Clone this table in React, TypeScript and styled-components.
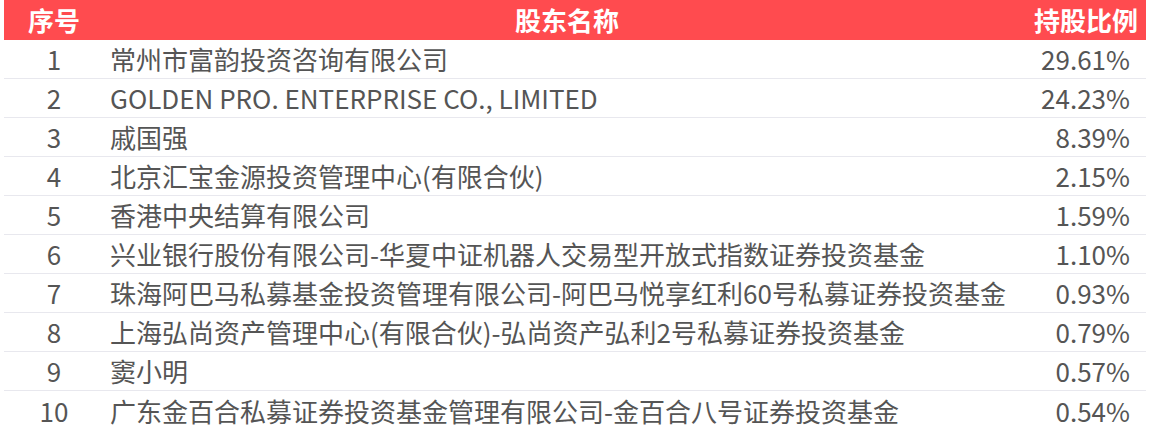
import React from "react";
import styled, { createGlobalStyle } from "styled-components";

const GlobalStyle = createGlobalStyle`
  html, body {
    margin: 0;
    padding: 0;
    background: #ffffff;
  }
  body {
    font-family: "Noto Sans CJK SC", "Noto Sans", sans-serif;
  }
`;

const Wrapper = styled.div`
  padding: 0 4px;
  width: 1150px;
  box-sizing: border-box;
`;

const Table = styled.div`
  display: flex;
  flex-direction: column;
`;

const Row = styled.div<{ $head?: boolean; $last?: boolean }>`
  display: grid;
  grid-template-columns: 100px 1fr 116px;
  align-items: center;
  box-sizing: border-box;
  height: ${(p) => (p.$head ? "40px" : "39px")};
  background: ${(p) => (p.$head ? "#ff4b4f" : "#ffffff")};
  color: ${(p) => (p.$head ? "#ffffff" : "#555555")};
  font-weight: ${(p) => (p.$head ? 700 : 400)};
  border-bottom: ${(p) => (p.$head || p.$last ? "none" : "1px solid #e8e8ee")};
  font-size: 26px;
  line-height: 1;
`;

const IndexCell = styled.div`
  text-align: center;
`;

const NameCell = styled.div<{ $head?: boolean }>`
  text-align: ${(p) => (p.$head ? "center" : "left")};
  padding-left: ${(p) => (p.$head ? "0" : "6px")};
  white-space: nowrap;
`;

const RatioCell = styled.div<{ $head?: boolean }>`
  text-align: right;
  padding-right: ${(p) => (p.$head ? "8px" : "16px")};
  white-space: nowrap;
`;

const holders = [
  { name: "常州市富韵投资咨询有限公司", ratio: "29.61%" },
  { name: "GOLDEN PRO. ENTERPRISE CO., LIMITED", ratio: "24.23%" },
  { name: "戚国强", ratio: "8.39%" },
  { name: "北京汇宝金源投资管理中心(有限合伙)", ratio: "2.15%" },
  { name: "香港中央结算有限公司", ratio: "1.59%" },
  { name: "兴业银行股份有限公司-华夏中证机器人交易型开放式指数证券投资基金", ratio: "1.10%" },
  { name: "珠海阿巴马私募基金投资管理有限公司-阿巴马悦享红利60号私募证券投资基金", ratio: "0.93%" },
  { name: "上海弘尚资产管理中心(有限合伙)-弘尚资产弘利2号私募证券投资基金", ratio: "0.79%" },
  { name: "窦小明", ratio: "0.57%" },
  { name: "广东金百合私募证券投资基金管理有限公司-金百合八号证券投资基金", ratio: "0.54%" },
];

export default function App() {
  return (
    <>
      <GlobalStyle />
      <Wrapper>
        <Table>
          <Row $head>
            <IndexCell>序号</IndexCell>
            <NameCell $head>股东名称</NameCell>
            <RatioCell $head>持股比例</RatioCell>
          </Row>
          {holders.map((h, i) => (
            <Row key={i} $last={i === holders.length - 1}>
              <IndexCell>{i + 1}</IndexCell>
              <NameCell>{h.name}</NameCell>
              <RatioCell>{h.ratio}</RatioCell>
            </Row>
          ))}
        </Table>
      </Wrapper>
    </>
  );
}
